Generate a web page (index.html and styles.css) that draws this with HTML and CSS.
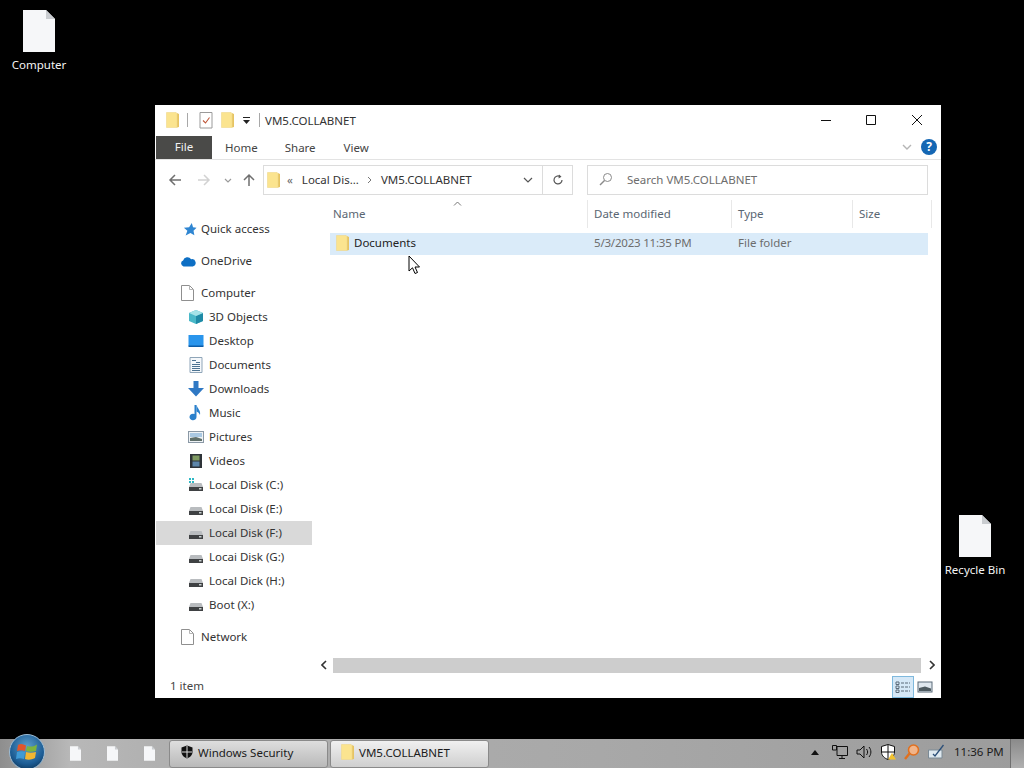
FILE: index.html
```html
<!DOCTYPE html>
<html lang="en">
<head>
<meta charset="utf-8">
<title>VM5.COLLABNET</title>
<link rel="stylesheet" href="styles.css">
</head>
<body>
<svg class="defs" width="0" height="0">
  <defs>
    <radialGradient id="orbfill" cx="50%" cy="35%" r="70%">
      <stop offset="0" stop-color="#5d9ecb"/>
      <stop offset="0.7" stop-color="#1c5c94"/>
      <stop offset="1" stop-color="#0e3558"/>
    </radialGradient>
    <symbol id="folder" viewBox="0 0 14 18">
      <path d="M0.5 1.5 H10 L11 2.5 V16.5 H0.5 Z" fill="#fbe48f"/>
      <path d="M10 1.5 L13 3 V16 L11 16.5 V2.5 Z" fill="#e6c463"/>
      <path d="M0.5 1.5 H10 L11 2.5 V16.5 H0.5 Z" fill="none" stroke="#f0d88a" stroke-width="0.6"/>
    </symbol>
    <symbol id="page" viewBox="0 0 13 16">
      <path d="M.5 .5 H8.500 L12.500 4.500 V15.500 H.5 Z" fill="#fff" stroke="#8f8f8f"/>
      <path d="M8.500 .5 V4.500 H12.500" fill="none" stroke="#b5b5b5"/>
    </symbol>
    <symbol id="deskdoc" viewBox="0 0 32 42">
      <path d="M0 0 H23 L32 9 V42 H0 Z" fill="#f6f7f9"/>
      <path d="M23 0 L32 9 H23 Z" fill="#c9ccd0"/>
    </symbol>
    <symbol id="disk" viewBox="0 0 16 14">
      <path d="M2.500 5 H13.500 L15 9 H1 Z" fill="#b9bcbf"/>
      <rect x="1" y="9" width="14" height="4" fill="#3f4143"/>
      <rect x="11" y="10" width="2.500" height="1.500" fill="#c8d0d0"/>
    </symbol>
  </defs>
</svg>

<main class="desktop">
  <div class="desk-icon desk-computer">
    <svg class="desk-doc"><use href="#deskdoc"/></svg>
    <span>Computer</span>
  </div>
  <div class="desk-icon desk-bin">
    <svg class="desk-doc"><use href="#deskdoc"/></svg>
    <span>Recycle Bin</span>
  </div>

  <section class="window">
    <header class="titlebar">
      <svg class="ic-folder"><use href="#folder"/></svg>
      <i class="vsep"></i>
      <svg class="ic-check" viewBox="0 0 14 18">
        <path d="M1 1.500 H13 V17 H1 Z" fill="#fff" stroke="#9a9a9a"/>
        <path d="M4 9.500 L6.500 12 L10.500 6.500" fill="none" stroke="#c0583a" stroke-width="1.100"/>
      </svg>
      <svg class="ic-folder"><use href="#folder"/></svg>
      <svg class="ic-qat" viewBox="0 0 9 8"><path d="M1 0.500 H8" stroke="#222" fill="none"/><path d="M1 3 H8 L4.500 7 Z" fill="#222"/></svg>
      <i class="vsep"></i>
      <span class="title-text">VM5.COLLABNET</span>
      <div class="caption">
        <svg viewBox="0 0 12 12" class="cap-btn"><path d="M1 6.500 H11" stroke="#111" fill="none"/></svg>
        <svg viewBox="0 0 12 12" class="cap-btn"><path d="M1.500 1.500 H10.500 V10.500 H1.500 Z" stroke="#111" fill="none"/></svg>
        <svg viewBox="0 0 12 12" class="cap-btn cap-close"><path d="M1 1 L11 11 M11 1 L1 11" stroke="#111" fill="none"/></svg>
      </div>
    </header>

    <nav class="ribbon">
      <span class="tab tab-file">File</span>
      <span class="tab tab-home">Home</span>
      <span class="tab tab-share">Share</span>
      <span class="tab tab-view">View</span>
      <svg class="ribbon-chev" viewBox="0 0 10 6"><path d="M1 1 L5 5 L9 1" fill="none" stroke="#b5b5b5" stroke-width="1.400"/></svg>
      <span class="help">?</span>
    </nav>

    <div class="addr-row">
      <svg class="nav-arrow" viewBox="0 0 14 14"><path d="M13 7 H2 M7 2 L2 7 L7 12" fill="none" stroke="#6f6f6f" stroke-width="1.500"/></svg>
      <svg class="nav-arrow nav-fwd" viewBox="0 0 14 14"><path d="M1 7 H12 M7 2 L12 7 L7 12" fill="none" stroke="#d2d2d2" stroke-width="1.500"/></svg>
      <svg class="nav-down" viewBox="0 0 8 5"><path d="M1 1 L4 4 L7 1" fill="none" stroke="#9a9a9a" stroke-width="1.200"/></svg>
      <svg class="nav-arrow nav-up" viewBox="0 0 14 14"><path d="M7 13 V2 M2 7 L7 2 L12 7" fill="none" stroke="#6f6f6f" stroke-width="1.500"/></svg>
      <div class="addr-box">
        <svg class="ic-folder"><use href="#folder"/></svg>
        <span class="crumb-more">«</span>
        <span class="crumb crumb-disk">Local Dis...</span>
        <svg class="crumb-sep" viewBox="0 0 5 8"><path d="M1 1 L4 4 L1 7" fill="none" stroke="#777"/></svg>
        <span class="crumb">VM5.COLLABNET</span>
        <svg class="addr-chev" viewBox="0 0 10 6"><path d="M1 1 L5 5 L9 1" fill="none" stroke="#555" stroke-width="1.200"/></svg>
        <div class="addr-refresh">
          <svg viewBox="0 0 12 12" class="refresh"><path d="M10 6 A4 4 0 1 1 8 2.500" fill="none" stroke="#555" stroke-width="1.200"/><path d="M7 .5 L9.500 2.800 L6.500 4.500 Z" fill="#555"/></svg>
        </div>
      </div>
      <div class="search-box">
        <svg viewBox="0 0 14 14" class="search-ic"><circle cx="8.500" cy="5.500" r="4" fill="none" stroke="#8a8a8a"/><path d="M5.500 8.500 L1 13" stroke="#8a8a8a" stroke-width="1.500" fill="none"/></svg>
        <span>Search VM5.COLLABNET</span>
      </div>
    </div>

    <div class="body">
      <aside class="navpane">
        <div class="nav-group">
          <div class="nav-row nav-qa"><svg class="ni" viewBox="0 0 16 16"><path d="M10 1 L11.500 6 L15.500 6.500 L12 10 L13 15 L8.500 12.500 L3 15.500 L5 10 L1 6.500 L7 6 Z" fill="#2f86d2"/></svg><span>Quick access</span></div>
        </div>
        <div class="nav-group">
          <div class="nav-row"><svg class="ni ni-wide" viewBox="0 0 18 12"><path d="M4 11.500 A3.500 3.500 0 0 1 3.500 4.800 A5 5 0 0 1 12.500 3.500 A4 4 0 0 1 14.500 11.500 Z" fill="#0d6fc4"/></svg><span>OneDrive</span></div>
        </div>
        <div class="nav-group">
          <div class="nav-row"><svg class="ni ni-page"><use href="#page"/></svg><span>Computer</span></div>
          <div class="nav-row sub"><svg class="ni" viewBox="0 0 16 16"><path d="M8 1 L15 4 V12 L8 15 L1 12 V4 Z" fill="#49b8c8"/><path d="M8 7 L15 4 V12 L8 15 Z" fill="#1f8aa6"/><path d="M8 1 L15 4 L8 7 L1 4 Z" fill="#a5e3e8"/></svg><span>3D Objects</span></div>
          <div class="nav-row sub"><svg class="ni" viewBox="0 0 16 16"><rect x="0.500" y="2" width="15" height="11" fill="#2a95ec"/><rect x="0.500" y="12.500" width="15" height="1.500" fill="#0c5da8"/></svg><span>Desktop</span></div>
          <div class="nav-row sub"><svg class="ni" viewBox="0 0 16 16"><path d="M2 .5 H14 V15.500 H2 Z" fill="#f5f8fb" stroke="#8fa5b8"/><path d="M4 3.500 H8 M8 5.500 H12 M4 7.500 H12 M4 9.500 H12 M4 11.500 H12 M4 13.500 H12" stroke="#4d7391"/></svg><span>Documents</span></div>
          <div class="nav-row sub"><svg class="ni" viewBox="0 0 16 16"><path d="M5.500 0 H10.500 V7 H16 L8 15.500 L0 7 H5.500 Z" fill="#2f78c4"/></svg><span>Downloads</span></div>
          <div class="nav-row sub"><svg class="ni" viewBox="0 0 16 16"><path d="M8.500 0 V12 A3.500 3.300 0 1 1 6.500 9 V0 Z" fill="#2a80cc"/><path d="M8.500 0 C9.500 4 13 5 12 10 C11 7.500 9.500 7 8.500 6.500 Z" fill="#2a80cc"/></svg><span>Music</span></div>
          <div class="nav-row sub"><svg class="ni" viewBox="0 0 16 16"><rect x="0.500" y="2.500" width="15" height="11" fill="#eef2f5" stroke="#8a98a5"/><rect x="2" y="4" width="12" height="4" fill="#a9c8e2"/><path d="M2 12 V9 L8 8 L14 10 V12 Z" fill="#5f6f6a"/></svg><span>Pictures</span></div>
          <div class="nav-row sub"><svg class="ni" viewBox="0 0 16 16"><rect x="2" y="1" width="12" height="14" fill="#2e3338"/><rect x="4.500" y="2.500" width="7" height="5" fill="#7f9a62"/><rect x="4.500" y="8.500" width="7" height="5" fill="#5d86aa"/></svg><span>Videos</span></div>
          <div class="nav-row sub"><svg class="ni" viewBox="0 0 16 14"><use href="#disk"/><path d="M1 0 H3 V2 H1 Z M4 0 H6 V2 H4 Z M1 3 H3 V5 H1 Z M4 3 H6 V5 H4 Z" fill="#2eb8c4"/></svg><span>Local Disk (C:)</span></div>
          <div class="nav-row sub"><svg class="ni" viewBox="0 0 16 14"><use href="#disk"/></svg><span>Local Disk (E:)</span></div>
          <div class="nav-row sub selected"><svg class="ni" viewBox="0 0 16 14"><use href="#disk"/></svg><span>Local Disk (F:)</span></div>
          <div class="nav-row sub"><svg class="ni" viewBox="0 0 16 14"><use href="#disk"/></svg><span>Locai Disk (G:)</span></div>
          <div class="nav-row sub"><svg class="ni" viewBox="0 0 16 14"><use href="#disk"/></svg><span>Local Dick (H:)</span></div>
          <div class="nav-row sub"><svg class="ni" viewBox="0 0 16 14"><use href="#disk"/></svg><span>Boot (X:)</span></div>
        </div>
        <div class="nav-group">
          <div class="nav-row"><svg class="ni ni-page"><use href="#page"/></svg><span>Network</span></div>
        </div>
      </aside>

      <div class="content">
        <div class="col-head">
          <svg class="sort-caret" viewBox="0 0 9 5"><path d="M1 4.500 L4.500 1 L8 4.500" fill="none" stroke="#777"/></svg>
          <span class="col col-name">Name</span>
          <span class="col col-date">Date modified</span>
          <span class="col col-type">Type</span>
          <span class="col col-size">Size</span>
        </div>
        <div class="file-row">
          <span class="cell cell-name"><svg class="ic-folder"><use href="#folder"/></svg><b>Documents</b></span>
          <span class="cell cell-date">5/3/2023 11:35 PM</span>
          <span class="cell cell-type">File folder</span>
        </div>
        <div class="spacer"></div>
        <div class="hscroll">
          <svg class="scroll-arrow" viewBox="0 0 6 10"><path d="M5 1 L1 5 L5 9" fill="none" stroke="#333" stroke-width="1.600"/></svg>
          <div class="scroll-thumb"></div>
          <svg class="scroll-arrow" viewBox="0 0 6 10"><path d="M1 1 L5 5 L1 9" fill="none" stroke="#333" stroke-width="1.600"/></svg>
        </div>
      </div>
    </div>

    <footer class="status">
      <span>1 item</span>
      <div class="views">
        <span class="view-btn active">
          <svg viewBox="0 0 16 12" class="view-ic"><path d="M1 1 H4 V3.500 H1 Z M1 5 H4 V7.500 H1 Z M1 9 H4 V11.500 H1 Z" fill="none" stroke="#5a6a78"/><path d="M6 2 H15 M6 6 H15 M6 10 H15" stroke="#5a6a78" stroke-dasharray="3 1"/></svg>
        </span>
        <span class="view-btn">
          <svg viewBox="0 0 16 12" class="view-ic"><rect x="1" y="1" width="14" height="10" fill="#dfe7ee" stroke="#5a6a78"/><path d="M2 10 V7 L8 5.500 L14 7.500 V10 Z" fill="#4e5a60"/></svg>
        </span>
      </div>
    </footer>
  </section>

  <svg class="cursor" viewBox="0 0 13 20"><path d="M1 1 V16 L4.500 12.800 L7 18.500 L9.500 17.500 L7 12 H11.500 Z" fill="#fff" stroke="#000"/></svg>
</main>

<footer class="taskbar">
  <svg class="orb" viewBox="0 0 36 36">
    <circle cx="18" cy="18" r="17.500" fill="url(#orbfill)"/>
    <circle cx="18" cy="18" r="17.500" fill="none" stroke="#9fbdd4"/>
    <path d="M9 11 C12 9 14 10 17 11.500 L16 17 C13 16 11 16 8 17 Z" fill="#e2552b"/>
    <path d="M18 12 C21 13 24 13 28 10.500 L27 17 C23 18 20 18 17 17 Z" fill="#7db43e"/>
    <path d="M8 18 C11 17 13 17 16 18 L15 25 C12 24 10 24 7 25 Z" fill="#3f9ad6"/>
    <path d="M17 18 C20 19 23 19 27 18 L26 24 C22 26 19 26 16 25 Z" fill="#f2b632"/>
  </svg>
  <div class="quick">
    <svg class="ql"><use href="#deskdoc"/></svg>
    <svg class="ql"><use href="#deskdoc"/></svg>
    <svg class="ql"><use href="#deskdoc"/></svg>
  </div>
  <div class="task-btn task-sec">
    <svg class="shield" viewBox="0 0 12 14"><path d="M6 .5 L11.500 2.500 V7 C11.500 10.500 8.500 12.500 6 13.500 C3.500 12.500 .5 10.500 .5 7 V2.500 Z" fill="#111"/><path d="M6 1 V13 M1 7 H11" stroke="#ddd" stroke-width="1"/></svg>
    <span>Windows Security</span>
  </div>
  <div class="task-btn task-exp">
    <svg class="ic-folder"><use href="#folder"/></svg>
    <span>VM5.COLLABNET</span>
  </div>
  <div class="tray">
    <svg class="tray-up" viewBox="0 0 8 5"><path d="M0 5 L4 0 L8 5 Z" fill="#111"/></svg>
    <svg class="tray-ic" viewBox="0 0 16 16"><path d="M5 2.500 H15.500 V11.500 H5 Z M10 11.500 V14 M7 14.500 H13 M.5 1.500 H4.500 V6 H.5 Z" fill="none" stroke="#111"/></svg>
    <svg class="tray-ic" viewBox="0 0 16 16"><path d="M1 6 H4 L8 2 V14 L4 10 H1 Z M10.500 5 C12 7 12 9 10.500 11 M13 3 C15.500 6 15.500 10 13 13" fill="none" stroke="#111"/></svg>
    <svg class="tray-ic" viewBox="0 0 16 16"><path d="M8 .5 L14.500 2.500 V8 C14.500 12 11 14.500 8 15.500 C5 14.500 1.500 12 1.500 8 V2.500 Z" fill="#fff" stroke="#111"/><path d="M8 1 V15 M2 8 H14" stroke="#111"/><path d="M12 9 L16 15.500 H8 Z" fill="#f2c230"/></svg>
    <svg class="tray-ic" viewBox="0 0 16 16"><circle cx="9.500" cy="6" r="5" fill="#f0b48a" stroke="#e0701f" stroke-width="1.600"/><path d="M5.500 9.500 L1 15" stroke="#e0701f" stroke-width="2.400"/></svg>
    <svg class="tray-ic" viewBox="0 0 16 16"><path d="M0.500 6 H14 V14 H0.500 Z" fill="#dfe9f0" stroke="#7a8a96"/><path d="M5 10 L7 12 L15.500 1" fill="none" stroke="#2c4f78" stroke-width="1.300"/></svg>
    <span class="clock">11:36 PM</span>
    <div class="show-desk"></div>
  </div>
</footer>
</body>
</html>
```

FILE: styles.css
```css
* { box-sizing: border-box; }
html, body { margin: 0; padding: 0; }
body {
  width: 1024px;
  height: 768px;
  overflow: hidden;
  display: flex;
  flex-direction: column;
  background: #000;
  font-family: "Noto Sans", "Open Sans", sans-serif;
  font-size: 11.5px;
  color: #2b2b2b;
  position: relative;
}
.defs { position: absolute; }
svg { display: block; flex: none; }

.desktop { flex: 1; position: relative; }
.desk-icon {
  position: absolute;
  width: 76px;
  display: flex;
  flex-direction: column;
  align-items: center;
  color: #f4f4f4;
  gap: 4px;
  line-height: 18px;
}
.desk-doc { width: 32px; height: 42px; }
.desk-computer { left: 1px; top: 10px; }
.desk-bin { left: 937px; top: 515px; }

.window {
  position: absolute;
  left: 155px;
  top: 105px;
  width: 786px;
  height: 593px;
  background: #fff;
  display: flex;
  flex-direction: column;
}
.ic-folder { width: 14px; height: 18px; }

.titlebar {
  height: 30px;
  display: flex;
  align-items: center;
  padding-left: 11px;
}
.vsep { width: 1px; height: 14px; background: #a8a8a8; margin: 0 11px 0 7px; }
.ic-check { width: 14px; height: 18px; margin-right: 8px; }
.ic-qat { width: 9px; height: 8px; margin: 2px 0 0 7px; }
.titlebar .ic-qat + .vsep { margin: 0 5px 0 8px; }
.title-text { color: #333; }
.caption { margin-left: auto; display: flex; gap: 33px; padding-right: 18px; }
.cap-btn { width: 12px; height: 12px; }
.cap-close { margin-left: 1px; }

.ribbon {
  height: 25px;
  display: flex;
  align-items: center;
  border-bottom: 1px solid #e3e3e3;
  padding-left: 1px;
  color: #444;
}
.tab { line-height: 24px; padding-top: 1px; }
.tab-file {
  width: 56px;
  height: 23px;
  line-height: 22px;
  padding-top: 0;
  margin-top: 1px;
  background: #4a4a48;
  color: #f2f2f2;
  text-align: center;
}
.tab-home { margin-left: 13px; }
.tab-share { margin-left: 27px; }
.tab-view { margin-left: 28px; }
.ribbon-chev { width: 10px; height: 6px; margin-left: auto; }
.help {
  width: 16px;
  height: 16px;
  border-radius: 50%;
  background: #1467b4;
  color: #fff;
  font-weight: 700;
  font-size: 12px;
  line-height: 16px;
  text-align: center;
  margin: 0 4px 0 9px;
}

.addr-row {
  height: 40px;
  display: flex;
  align-items: center;
  padding-left: 13px;
}
.nav-arrow { width: 14px; height: 14px; }
.nav-fwd { margin-left: 15px; }
.nav-down { width: 8px; height: 5px; margin-left: 13px; }
.nav-up { margin-left: 10px; }
.addr-box {
  margin-left: 7px;
  width: 310px;
  height: 30px;
  border: 1px solid #dcdcdc;
  display: flex;
  align-items: center;
  padding: 0 0 0 3px;
  color: #333;
}
.crumb-more, .crumb { position: relative; bottom: 1px; }
.crumb-more { margin-left: 6px; color: #666; }
.crumb-disk { margin-left: 9px; }
.crumb-sep { width: 5px; height: 8px; margin: 0 9px 0 8px; }
.addr-chev { width: 10px; height: 6px; margin-left: auto; margin-right: 9px; }
.addr-refresh {
  width: 30px;
  height: 28px;
  border-left: 1px solid #dcdcdc;
  display: flex;
  align-items: center;
  justify-content: center;
}
.refresh { width: 12px; height: 12px; }
.search-box {
  margin-left: 14px;
  width: 341px;
  height: 30px;
  border: 1px solid #dcdcdc;
  display: flex;
  align-items: center;
  padding: 0 0 2px 11px;
  gap: 14px;
  color: #6d6d6d;
}
.search-ic { width: 14px; height: 14px; }

.body { flex: 1; display: flex; min-height: 0; }
.navpane {
  width: 156px;
  padding-top: 17px;
  margin-left: 1px;
  display: flex;
  flex-direction: column;
  gap: 8px;
}
.nav-row {
  height: 24px;
  display: flex;
  align-items: center;
  padding-left: 25px;
  gap: 4px;
  color: #333;
}
.nav-row span { padding-bottom: 2px; }
.nav-row.sub { padding-left: 32px; gap: 5px; }
.nav-row.selected { background: #d9d9d9; }
.ni { width: 16px; height: 16px; }
.nav-qa .ni { width: 14px; height: 14px; margin-left: 2px; }
.ni-wide { width: 16px; height: 11px; margin-left: -1px; margin-right: 1px; }
.ni-page { width: 13px; height: 16px; margin-right: 3px; }

.content { flex: 1; display: flex; flex-direction: column; padding-left: 5px; min-width: 0; }
.col-head {
  height: 28px;
  position: relative;
  display: flex;
  align-items: center;
  color: #5a6672;
}
.col { height: 100%; display: flex; align-items: center; border-right: 1px solid #e8e8e8; padding: 0 0 2px 5px; }
.col-name { width: 271px; padding-left: 16px; }
.col-date { width: 144px; padding-left: 6px; }
.col-type { width: 121px; padding-left: 6px; }
.col-size { width: 79px; padding-left: 6px; }
.sort-caret { position: absolute; left: 136px; top: 1px; width: 9px; height: 5px; }

.file-row {
  height: 22px;
  margin: 5px 13px 0 13px;
  background: #daebf9;
  display: flex;
  align-items: center;
  padding-bottom: 2px;
}
.cell-name { width: 258px; display: flex; align-items: center; padding-left: 6px; gap: 4px; }
.cell-name b { font-weight: 400; color: #222; padding-bottom: 2px; }
.cell-date { width: 144px; padding-left: 6px; padding-bottom: 2px; color: #6d6d6d; letter-spacing: -0.2px; }
.cell-type { padding-left: 6px; padding-bottom: 2px; color: #6d6d6d; }
.spacer { flex: 1; }
.hscroll {
  height: 16px;
  display: flex;
  align-items: center;
  margin-bottom: 2px;
  margin-right: 3px;
  gap: 6px;
  padding: 0 3px 0 4px;
}
.scroll-arrow { width: 6px; height: 10px; }
.scroll-thumb { flex: 1; height: 15px; background: #cdcdcd; margin-right: 2px; }

.status {
  height: 23px;
  display: flex;
  align-items: center;
  padding-left: 15px;
  color: #444;
}
.status > span { padding-bottom: 2px; }
.views { margin-left: auto; display: flex; padding-right: 5px; }
.view-btn { width: 22px; height: 22px; display: flex; align-items: center; justify-content: center; border: 1px solid transparent; }
.view-btn.active { background: #d5e8f7; border-color: #7fb9dd; }
.view-ic { width: 16px; height: 12px; }

.cursor {
  position: absolute;
  left: 408px;
  top: 255px;
  width: 13px;
  height: 20px;
}

.taskbar {
  height: 29px;
  display: flex;
  align-items: center;
  position: relative;
  background: linear-gradient(to right, #8e8e8e 0, #b8b8b8 70px, #b0b0b0 160px, #a8a8a8 600px, #9c9c9c 1024px);
  color: #1b1b1b;
}
.orb { position: absolute; left: 9px; top: -5px; width: 36px; height: 36px; }
.quick { display: flex; gap: 26px; margin-left: 70px; width: 99px; }
.ql { width: 11px; height: 15px; }
.task-btn {
  height: 28px;
  display: flex;
  align-items: center;
  background: linear-gradient(#dedede, #b9b9b9);
  border: 1px solid #8a8a8a;
  border-radius: 3px;
  padding: 0 0 3px 10px;
  gap: 5px;
  width: 159px;
}
.task-sec { padding-left: 11px; }
.task-exp { margin-left: 2px; gap: 4px; background: linear-gradient(#f0f0f0, #cfcfcf); }
.shield { width: 12px; height: 14px; }
.tray { margin-left: auto; display: flex; align-items: center; height: 100%; }
.tray > svg, .clock { margin-bottom: 3px; }
.clock { padding-bottom: 1px; }
.tray-up { width: 8px; height: 5px; margin-right: 13px; }
.tray-ic { width: 16px; height: 16px; margin-right: 8px; }
.clock { margin-left: 2px; width: 52px; }
.show-desk { width: 14px; height: 100%; margin-left: 4px; background: linear-gradient(#8a8a8a, #b0b0b0); border-left: 1px solid #6f6f6f; }
```
